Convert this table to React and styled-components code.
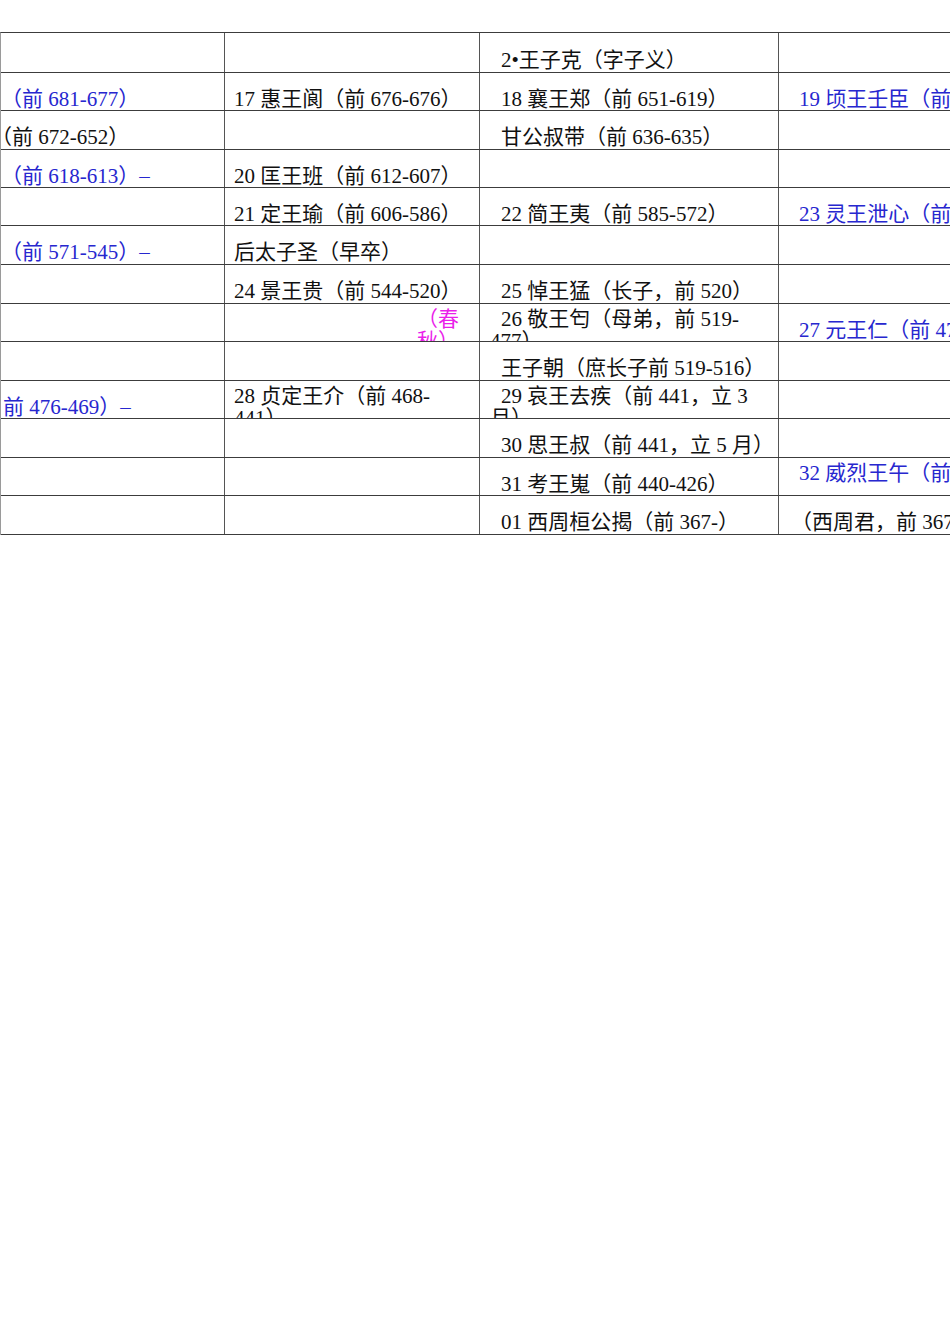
import styled, { createGlobalStyle } from 'styled-components';

const GlobalStyle = createGlobalStyle`
  html, body {
    margin: 0;
    padding: 0;
    background: #fff;
  }
`;

const COLS = [
  { width: 225, pad: 0, indent: 0 },
  { width: 255, pad: 9, indent: 0 },
  { width: 299, pad: 10, indent: 11 },
  { width: 320, pad: 10, indent: 10 },
];

const BLUE = '#2727cf';
const PINK = '#ea1fea';

// each row: [height, cells]; a cell is a string, or an object with lines / colour / alignment
const rows = [
  [40, ['', '', '2•王子克（字子义）', '']],
  [38, [
    { lines: ['（前 681-677）'], color: BLUE },
    '17 惠王阆（前 676-676）',
    '18 襄王郑（前 651-619）',
    { lines: ['19 顷王壬臣（前 618-613）'], color: BLUE },
  ]],
  [39, [{ lines: ['（前 672-652）'], shift: -10 }, '', '甘公叔带（前 636-635）', '']],
  [38, [{ lines: ['（前 618-613）–'], color: BLUE }, '20 匡王班（前 612-607）', '', '']],
  [38, [
    '',
    '21 定王瑜（前 606-586）',
    '22 简王夷（前 585-572）',
    { lines: ['23 灵王泄心（前 571-545）'], color: BLUE },
  ]],
  [39, [{ lines: ['（前 571-545）–'], color: BLUE }, '后太子圣（早卒）', '', '']],
  [39, ['', '24 景王贵（前 544-520）', '25 悼王猛（长子，前 520）', '']],
  [38, [
    '',
    { lines: ['（春', '秋）'], color: PINK, right: true },
    { lines: ['26 敬王匄（母弟，前 519-', '477）'] },
    { lines: ['27 元王仁（前 476-469）'], color: BLUE },
  ]],
  [39, ['', '', '王子朝（庶长子前 519-516）', '']],
  [38, [
    { lines: ['前 476-469）–'], color: BLUE, shift: 2 },
    { lines: ['28 贞定王介（前 468-', '441）'] },
    { lines: ['29 哀王去疾（前 441，立 3', '月）'] },
    '',
  ]],
  [39, ['', '', '30 思王叔（前 441，立 5 月）', '']],
  [38, ['', '', '31 考王嵬（前 440-426）', { lines: ['32 威烈王午（前 425-402）', '–'], color: BLUE }]],
  [39, ['', '', '01 西周桓公揭（前 367-）', { lines: ['（西周君，前 367-）'], shift: 2 }]],
];

export default function App() {
  return (
    <>
      <GlobalStyle />
      <Page>
        <Table>
          {rows.map(([h, cells], r) => (
            <Row key={r} $h={h}>
              {cells.map((cell, c) => {
                const col = COLS[c];
                const data = typeof cell === 'string' ? { lines: cell ? [cell] : [] } : cell;
                const first = data.shift !== undefined ? data.shift : col.indent;
                return (
                  <Cell key={c} $w={col.width} $pad={col.pad} $color={data.color} $right={data.right}>
                    {data.lines.map((line, i) => (
                      <Line key={i} $indent={i === 0 ? first : 0}>{line}</Line>
                    ))}
                  </Cell>
                );
              })}
            </Row>
          ))}
        </Table>
      </Page>
    </>
  );
}

const Page = styled.div`
  width: 950px;
  overflow: hidden;
  padding-top: 32px;
  font-family: "Liberation Serif", "Noto Sans CJK SC", serif;
  font-size: 21px;
  line-height: 22px;
  color: #111;
  text-spacing-trim: space-all;
`;

const Table = styled.div`
  display: flex;
  flex-direction: column;
  width: max-content;
  border-top: 1px solid #3c3c3c;
  border-left: 1px solid #9a9a9a;
`;

const Row = styled.div`
  display: flex;
  height: ${p => p.$h}px;
  box-sizing: border-box;
  border-bottom: 1px solid #3c3c3c;
`;

const Cell = styled.div`
  flex: none;
  box-sizing: border-box;
  width: ${p => p.$w}px;
  height: 100%;
  padding: 14px ${p => (p.$right ? 20 : 0)}px 0 ${p => p.$pad}px;
  border-right: 1px solid #555;
  overflow: hidden;
  display: flex;
  flex-direction: column;
  justify-content: center;
  align-items: ${p => (p.$right ? 'flex-end' : 'flex-start')};
  color: ${p => p.$color || '#111'};
  &:first-child {
    width: ${p => p.$w - 1}px;
  }
`;

const Line = styled.div`
  white-space: nowrap;
  margin-left: ${p => p.$indent}px;
`;
